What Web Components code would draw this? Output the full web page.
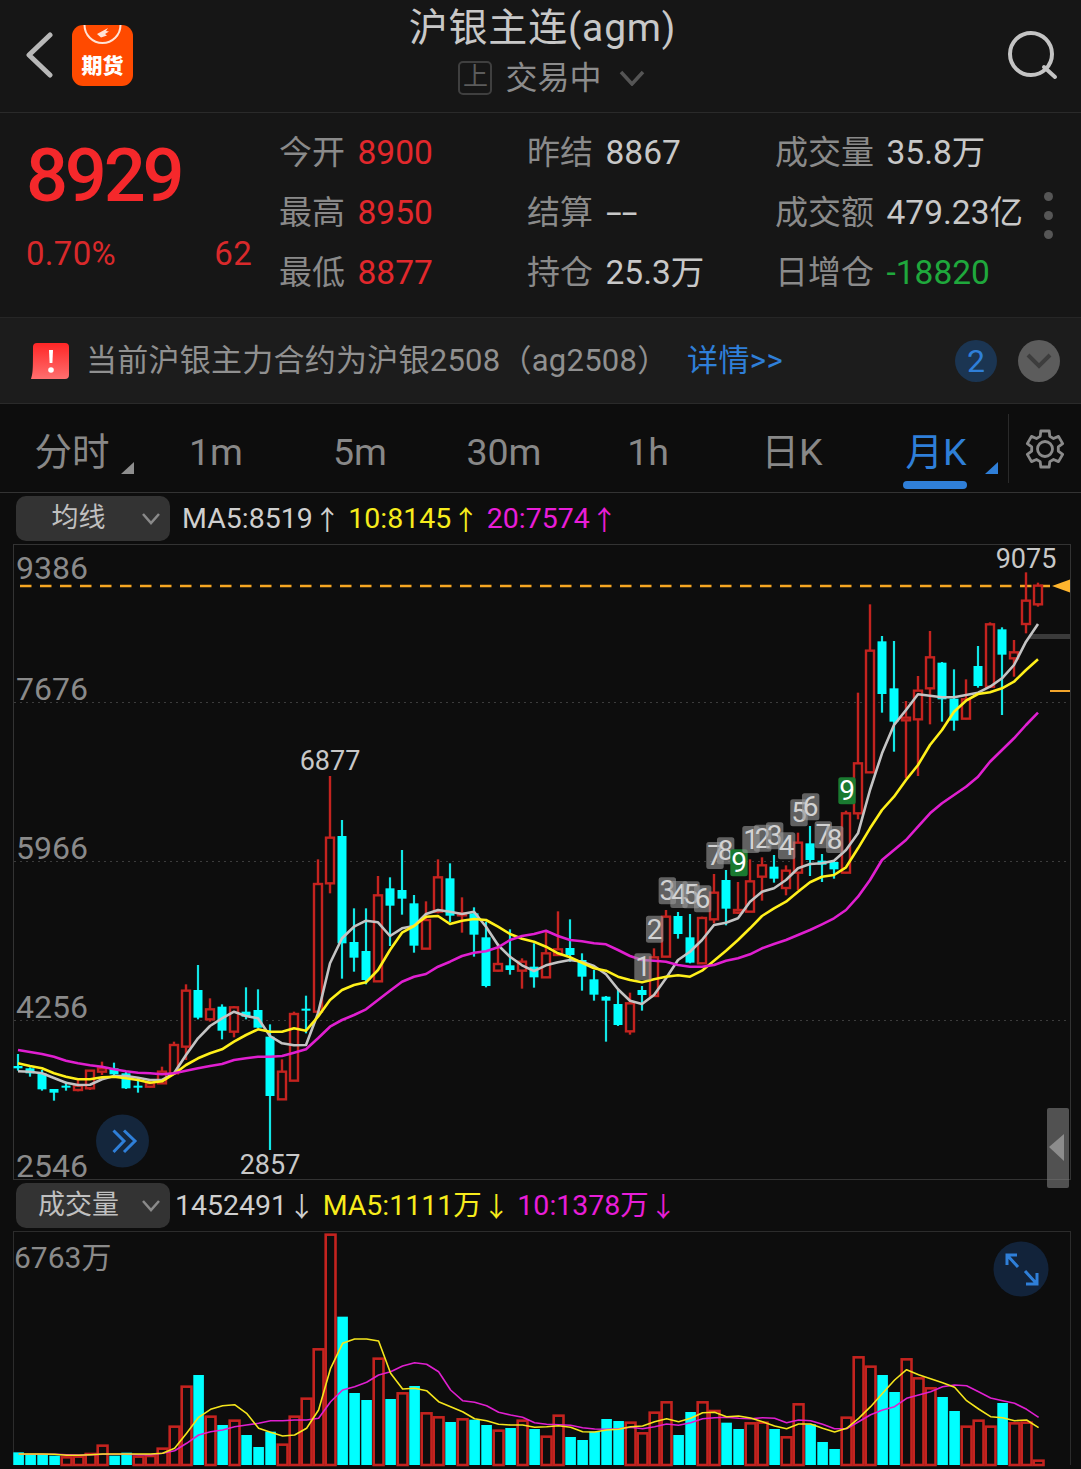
<!DOCTYPE html>
<html lang="zh">
<head>
<meta charset="utf-8">
<title>沪银主连(agm)</title>
<style>
  html, body { margin: 0; background: #0d0d0d; }
  body { width: 1081px; height: 1469px; overflow: hidden; font-family: Roboto, "Noto Sans CJK SC", sans-serif; }
</style>
</head>
<body>
<x-top-bar></x-top-bar>
<x-quote-panel price="8929" pct="0.70%" change="62">
  <x-stat label="今开" value="8900" tone="red"></x-stat>
  <x-stat label="昨结" value="8867"></x-stat>
  <x-stat label="成交量" value="35.8万"></x-stat>
  <x-stat label="最高" value="8950" tone="red"></x-stat>
  <x-stat label="结算" value="--"></x-stat>
  <x-stat label="成交额" value="479.23亿"></x-stat>
  <x-stat label="最低" value="8877" tone="red"></x-stat>
  <x-stat label="持仓" value="25.3万"></x-stat>
  <x-stat label="日增仓" value="-18820" tone="green"></x-stat>
</x-quote-panel>
<x-notice-bar count="2">当前沪银主力合约为沪银2508（ag2508）</x-notice-bar>
<x-period-tabs>
  <x-tab corner>分时</x-tab>
  <x-tab>1m</x-tab>
  <x-tab>5m</x-tab>
  <x-tab>30m</x-tab>
  <x-tab>1h</x-tab>
  <x-tab>日K</x-tab>
  <x-tab corner active>月K</x-tab>
</x-period-tabs>
<x-ma-row label="均线" lead="12">
  <x-ma-value color="#cfcfcf" arrow="↑">MA5:8519</x-ma-value>
  <x-ma-value color="#f7ec1c" arrow="↑">10:8145</x-ma-value>
  <x-ma-value color="#e81ed8" arrow="↑">20:7574</x-ma-value>
</x-ma-row>
<x-kline-chart></x-kline-chart>
<x-ma-row label="成交量" lead="5">
  <x-ma-value color="#cfcfcf" arrow="↓">1452491</x-ma-value>
  <x-ma-value color="#f7ec1c" arrow="↓">MA5:1111万</x-ma-value>
  <x-ma-value color="#e81ed8" arrow="↓">10:1378万</x-ma-value>
</x-ma-row>
<x-volume-chart></x-volume-chart>

<script>
(function() {

  const BLUE = '#2f7fd8';
  const RED = '#c4231f';
  const CYAN = '#00ffff';

  function shadow(el, html) {
    el.attachShadow({ mode: 'open' }).innerHTML = html;
  }

  // six lobe cog, 40px box
  function gearPath() {
    let d = '';
    for (let k = 0; k < 6; k++) {
      const a = (k * 60 - 90) * Math.PI / 180;
      const pt = (r, off) => {
        const t = a + off * Math.PI / 180;
        return (20 + r * Math.cos(t)).toFixed(1) + ' ' + (20 + r * Math.sin(t)).toFixed(1);
      };
      d += (k ? 'L' : 'M') + pt(13.5, -21) + 'L' + pt(18.5, -13) + 'L' + pt(18.5, 13) + 'L' + pt(13.5, 21);
    }
    return d + 'Z';
  }

  customElements.define('x-top-bar', class extends HTMLElement {
    constructor() {
      super();
      shadow(this, `
        <style>
          :host { display: grid; grid-template-columns: 1fr auto 1fr; height: 112px; background: #161616; border-bottom: 1px solid #2a2a2a; color: #c8c8c8; }
          .left { display: flex; align-items: center; padding: 0 0 2px 25px; gap: 19px; }
          .logo { position: relative; width: 61px; height: 61px; border-radius: 11px; background: #ff4a00; overflow: hidden; }
          .logo svg { position: absolute; left: 0; top: 0; }
          .logo b { position: absolute; left: 0; right: 0; top: 26px; text-align: center; font: 900 21px/26px "Noto Sans CJK SC", sans-serif; color: #fff; }
          .mid { display: flex; flex-direction: column; align-items: center; padding-top: 5px; }
          .title { font-size: 39px; line-height: 46px; letter-spacing: .8px; padding-left: 4px; }
          .status { display: flex; align-items: center; height: 34px; margin-top: 10px; padding-left: 22px; font-size: 32px; line-height: 34px; color: #8c8c8c; }
          .box { box-sizing: border-box; width: 34px; height: 34px; border: 2px solid #3f3f3f; border-radius: 5px; font-size: 25px; line-height: 28px; text-align: center; color: #5c5c5c; margin-right: 13px; }
          .status svg { margin-left: 17px; }
          .right { display: flex; justify-content: flex-end; align-items: center; padding: 0 23px 0 0; }
        </style>
        <div class="left">
          <svg width="28" height="46" viewBox="0 0 28 46"><polyline points="25,3 4,23 25,43" fill="none" stroke="#b8b8b8" stroke-width="5" stroke-linecap="round" stroke-linejoin="round"/></svg>
          <div class="logo">
            <svg width="61" height="61" viewBox="0 0 61 61">
              <circle cx="30.5" cy="0" r="18" fill="none" stroke="#ffe3d6" stroke-width="2"/>
              <path d="M25 9 L36 3 L34 6 L37 6.500 L33 9 L35 10.500 L29 12.500Z" fill="#ffe3d6"/>
            </svg>
            <b>期货</b>
          </div>
        </div>
        <div class="mid">
          <div class="title">沪银主连(agm)</div>
          <div class="status">
            <span class="box">上</span>交易中
            <svg width="26" height="16" viewBox="0 0 26 16"><polyline points="2,2 13,14 24,2" fill="none" stroke="#555" stroke-width="3.500"/></svg>
          </div>
        </div>
        <div class="right">
          <svg width="50" height="50" viewBox="0 0 50 50">
            <circle cx="23" cy="23" r="21" fill="none" stroke="#c4c4c4" stroke-width="4"/>
            <line x1="36" y1="36" x2="47" y2="46" stroke="#c4c4c4" stroke-width="4" stroke-linecap="round"/>
          </svg>
        </div>`);
    }
  });

  customElements.define('x-stat', class extends HTMLElement {
    constructor() {
      super();
      const tone = { red: '#e2282c', green: '#1fa83c' }[this.getAttribute('tone')] || '#c8c8c8';
      const value = this.getAttribute('value');
      shadow(this, `
        <style>
          :host { display: flex; align-items: baseline; gap: 12.500px; height: 60px; margin-left: -1px; line-height: 60px; white-space: nowrap; }
          .k { font-size: 33px; color: #8a8a8a; }
          .v { display: inline-block; font-size: 33.500px; color: ${tone}; transform-origin: left; ${value === '--' ? 'transform: scaleX(1.7);' : ''} }
        </style>
        <span class="k">${this.getAttribute('label')}</span><span class="v">${value}</span>`);
    }
  });

  customElements.define('x-quote-panel', class extends HTMLElement {
    constructor() {
      super();
      shadow(this, `
        <style>
          :host { display: grid; grid-template-columns: 280px 248px 248px 248px 1fr; grid-template-rows: repeat(3, 60px); box-sizing: border-box; height: 205px; padding-top: 10px; background: #161616; border-bottom: 1px solid #262626; }
          .hero { grid-column: 1; grid-row: 1 / 4; padding: 16.500px 28px 0; color: #e2282c; }
          .price { font-size: 74px; line-height: 72px; font-weight: 500; letter-spacing: -3.2px; color: #f5282b; margin-left: -2px; }
          .sub { display: flex; justify-content: space-between; margin: 22.500px 0 0 -2px; font-size: 33px; line-height: 40px; letter-spacing: .3px; color: #d9292b; }
          .dots { grid-column: 5; grid-row: 1 / 4; display: flex; flex-direction: column; align-items: center; justify-content: center; gap: 10px; width: 48px; padding-top: 4px; }
          .dots i { width: 9px; height: 9px; border-radius: 50%; background: #565656; }
        </style>
        <div class="hero">
          <div class="price">${this.getAttribute('price')}</div>
          <div class="sub"><span>${this.getAttribute('pct')}</span><span>${this.getAttribute('change')}</span></div>
        </div>
        <slot></slot>
        <div class="dots"><i></i><i></i><i></i></div>`);
    }
  });

  customElements.define('x-notice-bar', class extends HTMLElement {
    constructor() {
      super();
      shadow(this, `
        <style>
          :host { display: flex; align-items: center; box-sizing: border-box; height: 86px; padding: 0 21px 0 31px; background: #1c1c1c; border-bottom: 1px solid #2a2a2a; font-size: 31px; line-height: 42px; color: #909090; white-space: nowrap; }
          .text { width: 601px; margin-left: 17px; letter-spacing: .25px; }
          a { color: ${BLUE}; letter-spacing: .4px; }
          .end { display: flex; gap: 21px; margin-left: auto; }
          .dot { display: flex; align-items: center; justify-content: center; width: 42px; height: 42px; border-radius: 50%; }
          .count { background: #1b3552; color: ${BLUE}; font-size: 32px; }
          .more { background: #5c5c5c; }
        </style>
        <svg width="38" height="36" viewBox="0 0 38 36">
          <defs><linearGradient id="g" x1="0" y1="0" x2="0" y2="1"><stop offset="0" stop-color="#ff2626"/><stop offset="1" stop-color="#ff6f6f"/></linearGradient></defs>
          <path d="M6 0 H34 a4 4 0 0 1 4 4 V32 a4 4 0 0 1 -4 4 H0 C2 30 2 26 2 4 a4 4 0 0 1 4-4Z" fill="url(#g)"/>
          <path d="M18 7 h4 l-.6 13 h-2.800Z" fill="#fff"/>
          <circle cx="20" cy="27" r="2.800" fill="#fff"/>
        </svg>
        <span class="text"><slot></slot></span>
        <a>详情&gt;&gt;</a>
        <div class="end">
          <span class="dot count">${this.getAttribute('count')}</span>
          <span class="dot more"><svg width="26" height="16" viewBox="0 0 26 16"><polyline points="2,2 13,13 24,2" fill="none" stroke="#3d3d3d" stroke-width="4"/></svg></span>
        </div>`);
    }
  });

  customElements.define('x-tab', class extends HTMLElement {
    constructor() {
      super();
      shadow(this, `
        <style>
          :host { position: relative; display: flex; justify-content: center; align-items: center; width: 144px; height: 88px; padding-top: 7px; box-sizing: border-box; font-size: 37.500px; line-height: 44px; color: #888; }
          :host([active]) { color: ${BLUE}; }
          .corner { display: none; position: absolute; left: 121px; top: 58px; width: 13px; height: 12px; background: #8e8e8e; clip-path: polygon(100% 0, 100% 100%, 0 100%); }
          :host([corner]) .corner { display: block; }
          :host([active]) .corner { background: ${BLUE}; }
          .bar { display: none; position: absolute; left: 39px; top: 77px; width: 64px; height: 8px; border-radius: 4px; background: ${BLUE}; }
          :host([active]) .bar { display: block; }
        </style>
        <slot></slot><i class="corner"></i><i class="bar"></i>`);
    }
  });

  customElements.define('x-period-tabs', class extends HTMLElement {
    constructor() {
      super();
      shadow(this, `
        <style>
          :host { position: relative; display: flex; height: 88px; background: #0d0d0d; border-bottom: 1px solid #333; }
          .gear { flex: 1; display: flex; justify-content: center; align-items: center; margin: 10px 0 9px; border-left: 1px solid #2a2a2a; }
        </style>
        <slot></slot>
        <div class="gear">
          <svg width="40" height="42" viewBox="0 0 40 40">
            <path d="${gearPath()}" fill="none" stroke="#8a8a8a" stroke-width="2.800" stroke-linejoin="round"/>
            <circle cx="20" cy="20" r="7.500" fill="none" stroke="#8a8a8a" stroke-width="2.800"/>
          </svg>
        </div>`);
    }
  });

  customElements.define('x-ma-value', class extends HTMLElement {
    constructor() {
      super();
      shadow(this, `
        <style>
          :host { display: inline-flex; gap: 3.500px; font-size: 28.500px; line-height: 50px; color: ${this.getAttribute('color')}; white-space: nowrap; }
          .arrow { display: flex; justify-content: center; width: 22px; font-family: "Noto Sans CJK SC", sans-serif; font-size: 27px; }
        </style>
        <slot></slot><span class="arrow">${this.getAttribute('arrow')}</span>`);
    }
  });

  customElements.define('x-ma-row', class extends HTMLElement {
    constructor() {
      super();
      shadow(this, `
        <style>
          :host { display: flex; align-items: center; box-sizing: border-box; height: 51px; padding: 0 0 0 16px; background: #0d0d0d; }
          .pick { display: flex; align-items: center; box-sizing: border-box; width: 154px; height: 45px; margin-right: ${this.getAttribute('lead')}px; border-radius: 10px; background: #333; color: #c0c0c0; font-size: 27px; line-height: 43px; }
          .pick span { width: 125px; text-align: center; }
          .vals { display: flex; gap: 10px; }
        </style>
        <div class="pick">
          <span>${this.getAttribute('label')}</span>
          <svg width="20" height="14" viewBox="0 0 20 14"><polyline points="2,2 10,11 18,2" fill="none" stroke="#8a8a8a" stroke-width="2.500"/></svg>
        </div>
        <div class="vals"><slot></slot></div>`);
    }
  });

  // chart values below are read off at 3x: y = 740 + v / 3 up to candle 69, then y = 540 + v / 3
  const lowerY = v => 740 + v / 3;
  const upperY = v => 540 + v / 3;

  // [high, body top, body bottom, low, r|c]
  const candlesLower = [
    [942,978,985,992,'c'],[982,985,1000,1010,'c'],[990,1000,1048,1052,'c'],[1047,1047,1058,1082,'c'],[1025,1037,1043,1052,'c'],
    [1020,1037,1050,1054,'r'],[990,992,1045,1050,'r'],[965,985,995,1005,'r'],[968,985,1003,1005,'c'],[996,1000,1045,1047,'c'],
    [1015,1037,1042,1058,'c'],[1022,1030,1040,1042,'r'],[980,995,1030,1032,'r'],[905,915,1000,1000,'r'],[733,752,920,960,'r'],
    [675,750,833,838,'c'],[775,808,838,845,'r'],[793,800,872,898,'c'],[798,802,875,892,'r'],[742,815,830,838,'c'],
    [748,810,863,865,'c'],[853,890,1068,1230,'c'],[958,995,1078,1080,'r'],[815,822,1022,1022,'r'],[767,806,812,880,'c'],
    [358,432,815,820,'r'],[108,293,430,460,'r'],[240,288,610,716,'c'],[505,606,653,695,'c'],[505,633,720,733,'c'],
    [408,466,724,726,'r'],[412,445,497,618,'c'],[330,450,476,524,'c'],[465,490,617,638,'c'],[484,540,626,626,'r'],
    [358,412,515,520,'r'],[370,415,527,546,'c'],[472,520,526,578,'r'],[502,520,584,650,'c'],[545,592,738,742,'c'],
    [610,672,692,695,'r'],[568,676,690,704,'c'],[655,665,692,746,'r'],[610,680,712,743,'c'],[575,640,712,714,'r'],
    [514,628,645,648,'r'],[538,624,645,665,'c'],[640,660,710,752,'c'],[690,718,764,782,'c'],[768,770,782,905,'c'],
    [750,792,855,858,'c'],[758,790,874,884,'r'],[738,750,765,812,'c'],[625,652,768,770,'r'],[510,530,650,650,'r'],
    [516,528,582,596,'c'],[522,592,668,670,'c'],[530,534,670,672,'r'],[402,458,538,550,'r'],[390,420,506,556,'c'],
    [426,510,518,522,'r'],[358,424,515,516,'r'],[352,376,410,482,'r'],[345,380,416,428,'c'],[376,392,444,466,'r'],
    [278,308,398,450,'r'],[258,310,360,408,'c'],[342,362,374,426,'c'],[362,366,388,416,'c'],[212,220,398,400,'r']
  ];
  const candlesUpper = [
    [458,670,820,838,'r'],[193,332,697,697,'r'],[288,304,462,518,'c'],[303,445,545,635,'c'],[483,533,541,715,'r'],
    [408,452,538,708,'r'],[273,352,445,553,'r'],[366,368,478,545,'c'],[388,476,542,572,'c'],[418,478,536,538,'r'],
    [318,378,438,443,'c'],[247,253,440,442,'r'],[262,268,344,525,'c'],[300,337,355,410,'r'],[97,182,252,280,'r'],[128,137,193,200,'r']
  ];

  const ma5 = [994,995,1000,1014,1028,1035,1034,1018,1008,1008,1013,1020,1020,1000,945,895,858,835,815,828,835,888,910,916,915,820,670,595,560,
    542,547,588,565,558,522,510,515,522,515,560,615,650,676,693,676,667,660,665,678,703,748,782,792,
    765,715,660,635,600,555,548,535,485,455,445,420,385,372,370,362,330];
  const ma5Upper = [880,750,640,555,510,463,467,472,472,465,458,440,415,375,305,252];
  const ma10 = [970,978,985,1000,1010,1018,1018,1012,1010,1015,1020,1028,1024,1002,975,955,940,928,905,885,868,875,875,865,872,830,780,750,735,
    727,690,630,578,558,530,528,552,542,537,540,560,582,596,605,620,640,652,668,685,692,710,720,727,
    718,710,706,710,692,662,632,600,565,528,505,485,455,427,410,405,382];
  const ma10Upper = [925,865,810,770,720,675,615,570,515,482,462,457,445,425,390,358];
  const ma20 = [930,936,942,950,962,970,976,980,988,994,998,1000,1003,1000,992,985,978,972,960,955,950,950,948,938,928,895,860,840,825,
    808,780,752,725,710,702,680,665,648,638,634,622,600,588,582,572,588,600,604,610,613,630,648,660,
    662,665,675,680,680,675,662,655,643,625,612,600,585,570,553,535,510];
  const ma20Upper = [1070,1020,960,930,900,860,820,790,765,740,710,665,630,595,555,518];

  // [center x at 3x from 630, top at 3x from 740, digit, green]
  const tags = [
    [39,640,1],[74,527,2],[112,412,3],[147,423,4],[183,424,5],[218,436,6],[255,306,7],[287,292,8],[327,328,9,1],
    [363,258,1],[398,254,2],[434,247,3],[470,277,4],[507,178,5],[542,160,6],[580,244,7],[614,258,8],[651,112,9,1]
  ];

  const candleX = i => 18 + 12 * i;

  function candleSvg(c, i, toY) {
    const x = candleX(i);
    const [high, top, bottom, low] = [c[0], c[1], c[2], c[3]].map(toY);
    if (c[4] === 'c') {
      return `<line x1="${x}" x2="${x}" y1="${high}" y2="${low}" stroke="#12e6e6" stroke-width="2.200"/>` +
        `<rect x="${x - 4.500}" y="${top}" width="9" height="${Math.max(bottom - top, 2)}" fill="${CYAN}"/>`;
    }
    return `<line x1="${x}" x2="${x}" y1="${high}" y2="${top}" stroke="${RED}" stroke-width="2.400"/>` +
      `<line x1="${x}" x2="${x}" y1="${bottom}" y2="${low}" stroke="${RED}" stroke-width="2.400"/>` +
      `<rect x="${x - 4}" y="${top}" width="8" height="${bottom - top}" fill="#0d0d0d" stroke="${RED}" stroke-width="2.400"/>`;
  }

  function maLine(lower, upper, color, width) {
    const pts = lower.map((v, i) => candleX(i) + ',' + lowerY(v).toFixed(1))
      .concat(upper.map((v, i) => candleX(i + lower.length) + ',' + upperY(v).toFixed(1)));
    return `<polyline points="${pts.join(' ')}" fill="none" stroke="${color}" stroke-width="${width}" stroke-linejoin="round"/>`;
  }

  function tagSvg(t) {
    const x = 630 + t[0] / 3;
    const y = 740 + t[1] / 3;
    return `<rect x="${x - 8.700}" y="${y}" width="17.400" height="27" rx="2.500" fill="${t[3] ? '#1a7a30' : 'rgba(150,150,150,.62)'}"/>` +
      `<text x="${x}" y="${y + 23}" text-anchor="middle" font-size="28" fill="${t[3] ? '#fff' : '#d2d2d2'}">${t[2]}</text>`;
  }

  function priceLabel(txt, y) {
    return `<text x="16" y="${y}" font-size="32" fill="#8a8a8a">${txt}</text>`;
  }

  function peakLabel(txt, x, y) {
    return `<text x="${x}" y="${y}" text-anchor="middle" font-size="27" fill="#c8c8c8">${txt}</text>`;
  }

  const chartStyle = `
    :host { display: block; box-sizing: border-box; width: 1058px; margin-left: 13px; border: 1px solid #333; }
    svg { display: block; overflow: visible; font-family: Roboto, "Noto Sans CJK SC", sans-serif; }`;

  customElements.define('x-kline-chart', class extends HTMLElement {
    constructor() {
      super();
      const grid = [702.5, 861.5, 1020.5].map(y =>
        `<line x1="14" x2="1070" y1="${y}" y2="${y}" stroke="#3c3c3c" stroke-width="1" stroke-dasharray="2 4"/>`).join('');
      const candles = candlesLower.map((c, i) => candleSvg(c, i, lowerY)).join('') +
        candlesUpper.map((c, i) => candleSvg(c, i + candlesLower.length, upperY)).join('');
      shadow(this, `
        <style>${chartStyle} :host { height: 636px; }</style>
        <svg width="1056" height="634" viewBox="14 545 1056 634">
          ${grid}
          <rect x="1030" y="634" width="40" height="5" fill="#3a3a3a"/>
          <rect x="1050" y="690" width="20" height="2" fill="#f2a52c"/>
          <line x1="20" x2="1050" y1="586" y2="586" stroke="#f5a623" stroke-width="2.400" stroke-dasharray="11.500 8.500"/>
          <polygon points="1052,586 1070,579.500 1070,592.500" fill="#ffb52e"/>
          ${candles}
          ${maLine(ma5, ma5Upper, '#c4c4c4', 2.6)}
          ${maLine(ma10, ma10Upper, '#fff01a', 2.6)}
          ${maLine(ma20, ma20Upper, '#e01fd0', 2.6)}
          ${tags.map(tagSvg).join('')}
          ${priceLabel('9386', 579)}${priceLabel('7676', 700)}${priceLabel('5966', 859)}${priceLabel('4256', 1018)}${priceLabel('2546', 1177)}
          ${peakLabel('9075', 1026, 568)}${peakLabel('6877', 330, 770)}${peakLabel('2857', 270, 1174)}
          <circle cx="122.500" cy="1141" r="26.500" fill="#14263c"/>
          <path d="M113.500 1130.500 L124 1141 L113.500 1152 M124 1130.500 L135 1141 L124 1152" fill="none" stroke="${BLUE}" stroke-width="3"/>
          <rect x="1047" y="1108" width="22" height="80" rx="2" fill="rgba(125,125,125,.62)"/>
          <polygon points="1049,1147 1064,1134 1064,1161" fill="#8c8c8c"/>
        </svg>`);
    }
  });

  // volume: [top at 3x from 1180, r|c]
  const volBars = [
    [817,'c'],[824,'c'],[824,'c'],[827,'c'],[832,'r'],[830,'r'],[822,'r'],[797,'r'],[827,'c'],[818,'c'],
    [830,'r'],[828,'r'],[806,'r'],[740,'r'],[620,'r'],[585,'c'],[710,'r'],[735,'c'],[722,'r'],[765,'c'],
    [801,'c'],[755,'c'],[794,'r'],[710,'r'],[656,'r'],[508,'r'],[164,'r'],[410,'c'],[639,'c'],[660,'c'],
    [536,'r'],[657,'c'],[640,'r'],[618,'c'],[700,'r'],[712,'r'],[726,'c'],[718,'r'],[719,'c'],[735,'c'],
    [752,'r'],[744,'c'],[722,'r'],[747,'c'],
    [770,'r'],[707,'r'],[771,'c'],[780,'c'],[755,'c'],[717,'c'],[723,'c'],[728,'r'],[760,'r'],[698,'r'],
    [667,'r'],[765,'c'],[696,'c'],[667,'r'],[693,'r'],[728,'c'],[747,'c'],[730,'r'],[728,'r'],[747,'c'],
    [772,'r'],[673,'r'],[733,'c'],[786,'c'],[807,'c'],[713,'r'],[532,'r'],[560,'r'],[585,'c'],[636,'c'],
    [538,'r'],[595,'r'],[625,'r'],[651,'c'],[693,'c'],[740,'r'],[722,'r'],[740,'r'],[669,'c'],[730,'r'],[728,'r'],[842,'r']
  ];
  const volMa5 = [822,822,822,823,826,826,824,822,822,822,822,822,820,805,760,712,688,677,674,700,745,757,768,765,745,690,565,490,477,477,483,580,627,625,632,665,680,695,716,722,733,735,735,742,
    740,737,742,755,756,750,748,740,738,725,716,725,715,698,697,710,708,714,725,738,746,732,732,745,756,745,715,680,640,600,569,584,596,608,622,662,687,710,713,722,720,743];
  const volMa10 = [823,823,823,823,824,825,824,823,823,823,824,824,820,812,790,765,755,750,740,735,730,722,722,720,720,715,665,630,620,607,585,575,558,548,553,575,630,662,667,677,697,705,712,728,
    733,734,736,743,747,748,746,742,746,740,732,736,728,716,713,712,715,716,713,715,728,720,722,733,746,746,725,704,690,680,655,645,635,620,615,617,635,654,662,670,688,712];

  const volX = i => 18.6 + 12 * i;
  const volY = v => 1180 + v / 3;

  customElements.define('x-volume-chart', class extends HTMLElement {
    constructor() {
      super();
      const base = 1465;
      const bars = volBars.map((b, i) => {
        const x = volX(i);
        const top = volY(b[0]);
        if (b[1] === 'c') {
          return `<rect x="${x - 5.300}" y="${top}" width="10.600" height="${base - top}" fill="${CYAN}"/>`;
        }
        return `<rect x="${x - 4.900}" y="${top}" width="9.800" height="${base - top}" fill="none" stroke="${RED}" stroke-width="2.600"/>`;
      }).join('');
      const line = (arr, color) => `<polyline points="${arr.map((v, i) => volX(i) + ',' + volY(v).toFixed(1)).join(' ')}" fill="none" stroke="${color}" stroke-width="1.600" stroke-linejoin="round"/>`;
      shadow(this, `
        <style>${chartStyle} :host { height: 234px; border-color: #2c2c2c; border-width: 1px 1px 0 1px; }</style>
        <svg width="1056" height="233" viewBox="14 1232 1056 233">
          ${bars}
          ${line(volMa10, '#e01fd0')}
          ${line(volMa5, '#f5e51c')}
          <text x="14" y="1268" font-size="30" fill="#8a8a8a">6763万</text>
          <circle cx="1021" cy="1269" r="27.500" fill="#12233a"/>
          <path d="M1018 1267 L1007 1255 M1007 1265 V1255 H1017 M1025 1271 L1036 1283 M1026 1284 H1037 V1273" fill="none" stroke="${BLUE}" stroke-width="3"/>
        </svg>`);
    }
  });

}());
</script>
</body>
</html>
